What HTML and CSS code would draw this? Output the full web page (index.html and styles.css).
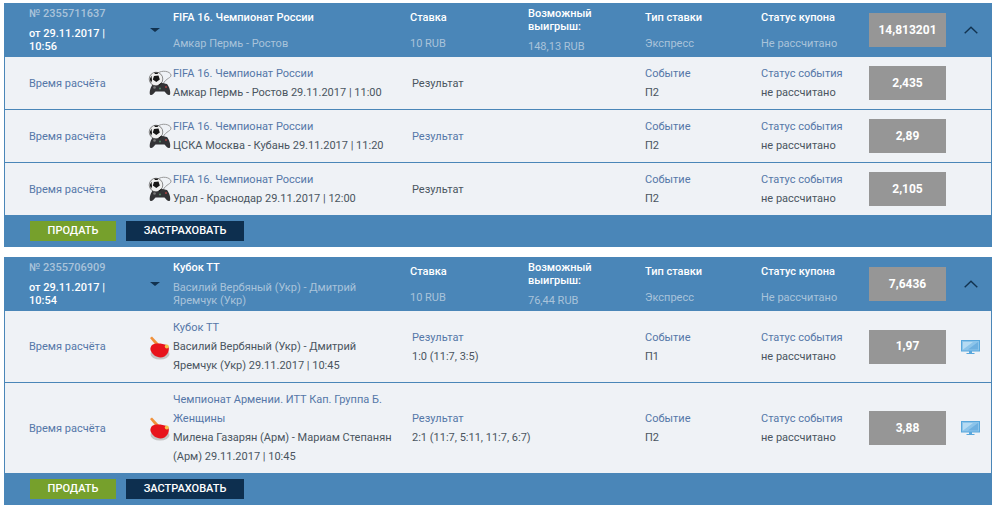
FILE: index.html
```html
<!DOCTYPE html>
<html lang="ru">
<head>
<meta charset="utf-8">
<title>Купоны</title>
<link rel="stylesheet" href="styles.css">
</head>
<body>
<svg class="defs" width="0" height="0">
  <defs>
    <symbol id="game" viewBox="0 0 24 26">
      <path d="M10 3 C14 0 22 1 23 5 C23.500 8 18 8 15 14" fill="none" stroke="#8f8f8f" stroke-width=".9"/>
      <path d="M5 14 C8 12.500 16 12.500 19 14 C21 16 23 22 22 24.500 C20.500 26 18.500 24 16.500 21.500 L7.500 21.500 C5.500 24 3.500 26 2 24.500 C1 22 3 16 5 14Z" fill="#333336"/>
      <circle cx="18" cy="17" r="1" fill="#a44"/><circle cx="6.500" cy="17.500" r="1.300" fill="#7a7a7a"/><circle cx="12" cy="18.500" r="1" fill="#586"/>
      <circle cx="8" cy="9" r="6.800" fill="#f0f0f0" stroke="#444" stroke-width=".6"/>
      <path d="M6 6 L10.500 5.500 L11.800 9.500 L8.300 12 L4.800 9.500Z M1.800 9 L3.500 5.500 L4 10.500 L3 13Z M9.500 15.500 L13.500 12.500 L14 13 L11.500 15.500Z M6 2.600 L10.500 2.600 L9.500 4 L7 4Z" fill="#161616"/>
    </symbol>
    <symbol id="paddle" viewBox="0 0 24 26">
      <ellipse cx="12" cy="20" rx="9.500" ry="5.500" fill="#c4c4c4"/>
      <path d="M2 4 L4 2.500 L11 10 L8.500 12Z" fill="#f0913a"/>
      <path d="M4 11 C8 8.500 14 9.500 19 11 C22 13 21.500 19 16.500 22.500 C11 25 4.500 22 2.500 16 C2 14 3 12 4 11Z" fill="#e8141c"/>
      <circle cx="18.800" cy="12.600" r="2" fill="#f5c34a"/>
    </symbol>
    <symbol id="screen" viewBox="0 0 19 14">
      <rect x=".5" y=".5" width="18" height="10.500" fill="#8cc4ea" stroke="#58a7dc"/>
      <path d="M2 9.500 L2 2 L12 2Z" fill="#b5dbf3"/>
      <path d="M17 2 L17 9.500 L7 9.500Z" fill="#6eb0e0"/>
      <rect x="8" y="11" width="3" height="2" fill="#58a7dc"/>
      <rect x="5.500" y="13" width="8" height="1" fill="#58a7dc"/>
    </symbol>
  </defs>
</svg>

<section class="coupon">
  <header class="grid head">
    <div class="stack tight"><span class="muted num">№ 2355711637</span><span class="strong date">от 29.11.2017 | 10:56</span></div>
    <div class="caret"></div>
    <div class="stack"><span class="strong">FIFA 16. Чемпионат России</span><span class="muted">Амкар Пермь - Ростов</span></div>
    <div class="stack"><span class="strong">Ставка</span><span class="muted">10 RUB</span></div>
    <div class="stack tight narrow"><span class="strong">Возможный выигрыш:</span><span class="muted">148,13 RUB</span></div>
    <div class="stack"><span class="strong">Тип ставки</span><span class="muted">Экспресс</span></div>
    <div class="stack"><span class="strong">Статус купона</span><span class="muted">Не рассчитано</span></div>
    <div class="odds">14,813201</div>
    <svg class="chevron" width="14" height="8" viewBox="0 0 14 8"><path d="M.7 7.300 L7 1.200 L13.300 7.300" fill="none" stroke="#12324f" stroke-width="1.400"/></svg>
  </header>
  <div class="grid row">
    <div class="link">Время расчёта</div>
    <svg class="sport"><use href="#game"/></svg>
    <div class="cell"><span class="link">FIFA 16. Чемпионат России</span><br>Амкар Пермь - Ростов 29.11.2017 | 11:00</div>
    <div class="cell res">Результат</div>
    <div class="spacer"></div>
    <div class="cell"><span class="link">Событие</span><br>П2</div>
    <div class="cell"><span class="link">Статус события</span><br>не рассчитано</div>
    <div class="odds">2,435</div>
  </div>
  <div class="grid row">
    <div class="link">Время расчёта</div>
    <svg class="sport"><use href="#game"/></svg>
    <div class="cell"><span class="link">FIFA 16. Чемпионат России</span><br>ЦСКА Москва - Кубань 29.11.2017 | 11:20</div>
    <div class="cell res link">Результат</div>
    <div class="spacer"></div>
    <div class="cell"><span class="link">Событие</span><br>П2</div>
    <div class="cell"><span class="link">Статус события</span><br>не рассчитано</div>
    <div class="odds">2,89</div>
  </div>
  <div class="grid row">
    <div class="link">Время расчёта</div>
    <svg class="sport"><use href="#game"/></svg>
    <div class="cell"><span class="link">FIFA 16. Чемпионат России</span><br>Урал - Краснодар 29.11.2017 | 12:00</div>
    <div class="cell res">Результат</div>
    <div class="spacer"></div>
    <div class="cell"><span class="link">Событие</span><br>П2</div>
    <div class="cell"><span class="link">Статус события</span><br>не рассчитано</div>
    <div class="odds">2,105</div>
  </div>
  <footer class="foot"><button class="btn sell">ПРОДАТЬ</button><button class="btn insure">ЗАСТРАХОВАТЬ</button></footer>
</section>

<section class="coupon">
  <header class="grid head">
    <div class="stack tight"><span class="muted num">№ 2355706909</span><span class="strong date">от 29.11.2017 | 10:54</span></div>
    <div class="caret"></div>
    <div class="stack tight"><span class="strong">Кубок ТТ</span><span class="muted">Василий Вербяный (Укр) - Дмитрий Яремчук (Укр)</span></div>
    <div class="stack"><span class="strong">Ставка</span><span class="muted">10 RUB</span></div>
    <div class="stack tight narrow"><span class="strong">Возможный выигрыш:</span><span class="muted">76,44 RUB</span></div>
    <div class="stack"><span class="strong">Тип ставки</span><span class="muted">Экспресс</span></div>
    <div class="stack"><span class="strong">Статус купона</span><span class="muted">Не рассчитано</span></div>
    <div class="odds">7,6436</div>
    <svg class="chevron" width="14" height="8" viewBox="0 0 14 8"><path d="M.7 7.300 L7 1.200 L13.300 7.300" fill="none" stroke="#12324f" stroke-width="1.400"/></svg>
  </header>
  <div class="grid row">
    <div class="link">Время расчёта</div>
    <svg class="sport"><use href="#paddle"/></svg>
    <div class="cell"><span class="link">Кубок ТТ</span><br>Василий Вербяный (Укр) - Дмитрий Яремчук (Укр) 29.11.2017 | 10:45</div>
    <div class="cell res"><span class="link">Результат</span><br>1:0 (11:7, 3:5)</div>
    <div class="spacer"></div>
    <div class="cell"><span class="link">Событие</span><br>П1</div>
    <div class="cell"><span class="link">Статус события</span><br>не рассчитано</div>
    <div class="odds">1,97</div>
    <svg class="monitor"><use href="#screen"/></svg>
  </div>
  <div class="grid row">
    <div class="link">Время расчёта</div>
    <svg class="sport"><use href="#paddle"/></svg>
    <div class="cell"><span class="link">Чемпионат Армении. ИТТ Кап. Группа Б. Женщины</span><br>Милена Газарян (Арм) - Мариам Степанян (Арм) 29.11.2017 | 10:45</div>
    <div class="cell res"><span class="link">Результат</span><br>2:1 (11:7, 5:11, 11:7, 6:7)</div>
    <div class="spacer"></div>
    <div class="cell"><span class="link">Событие</span><br>П2</div>
    <div class="cell"><span class="link">Статус события</span><br>не рассчитано</div>
    <div class="odds">3,88</div>
    <svg class="monitor"><use href="#screen"/></svg>
  </div>
  <footer class="foot"><button class="btn sell">ПРОДАТЬ</button><button class="btn insure">ЗАСТРАХОВАТЬ</button></footer>
</section>
</body>
</html>
```
FILE: styles.css
```css
* { box-sizing: border-box; }
html, body { margin: 0; background: #fff; }
body {
  padding: 3px 5px 0 4px;
  font: 400 11px/19px Roboto, "Liberation Sans", sans-serif;
  color: #4a5560;
}
.defs { position: absolute; }
.coupon {
  background: #eff2f6;
  border: solid #4a86b8;
  border-width: 0 1px;
  margin-bottom: 10px;
}
.grid {
  display: grid;
  grid-template-columns: 119px 25px 237px 118px 117px 116px 108px 77px 1fr;
  align-items: center;
  padding-left: 24px;
}
.head {
  height: 54px;
  background: #4a86b8;
  color: #fff;
}
.stack {
  display: flex;
  flex-direction: column;
  gap: 13px;
  line-height: 13px;
  padding-right: 12px;
}
.stack.tight { gap: 7px; }
.narrow { padding-right: 30px; }
.strong { font-weight: 500; color: #fff; }
.date { padding-right: 10px; }
.muted { color: #a9c3da; }
.num { font-weight: 500; }
.caret {
  width: 0;
  height: 0;
  margin-left: 2px;
  border: solid transparent;
  border-width: 4px 5px 0;
  border-top-color: #12324f;
}
.odds {
  height: 34px;
  background: #969696;
  color: #fff;
  font-weight: 700;
  font-size: 12px;
  display: flex;
  align-items: center;
  justify-content: center;
}
.chevron { justify-self: start; margin-left: 18px; }
.row {
  padding-top: 7px;
  padding-bottom: 7px;
  border-bottom: 1px solid #4a86b8;
}
.row:nth-last-child(2) { border-bottom: 0; }
.link { color: #5577a8; }
.cell { padding-right: 12px; }
.res { padding-left: 2px; padding-right: 0; white-space: nowrap; }
.sport { width: 24px; height: 26px; }
.monitor { width: 19px; height: 14px; justify-self: start; margin-left: 15px; }
.foot {
  height: 32px;
  background: #4a86b8;
  padding: 6px 0 0 25px;
  display: flex;
  align-items: flex-start;
  gap: 10px;
}
.btn {
  height: 20px;
  border: 0;
  padding: 0;
  color: #fff;
  font: 500 11px/20px Roboto, "Liberation Sans", sans-serif;
}
.sell { width: 86px; background: #76a02c; }
.insure { width: 118px; background: #0d2f4f; }
```
